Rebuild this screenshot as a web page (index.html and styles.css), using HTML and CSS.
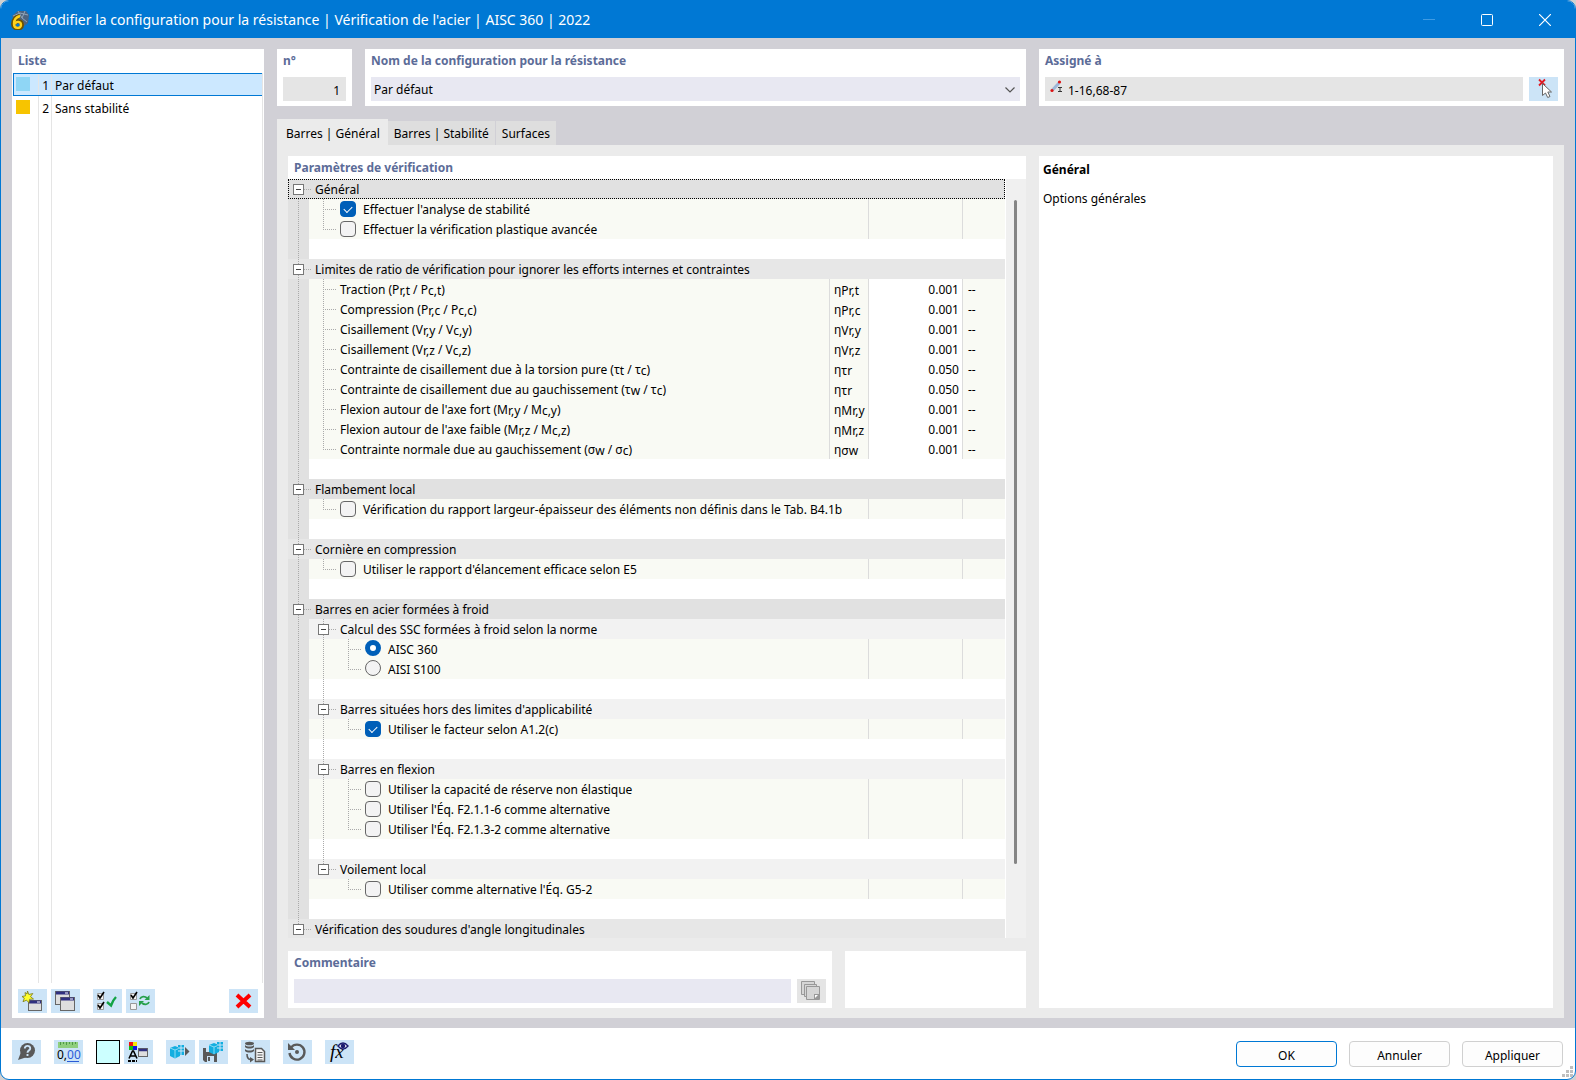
FILE: index.html
```html
<!DOCTYPE html>
<html lang="fr">
<head>
    <meta charset="UTF-8">
    <meta name="viewport" content="width=device-width, initial-scale=1.0">
    <title>Modifier la configuration pour la résistance</title>
    <link rel="stylesheet" href="styles.css">
</head>
<body>
<div class="window">
    <header class="titlebar">
        <svg class="app-icon" width="20" height="20" viewBox="0 0 20 20">
            <path d="M2 6 L8 1 L16 1 L19 5 L18 13 L13 17 L6 12 Z" fill="#4d6480"/>
            <path d="M3 6 L10 3 L18 5 M8 1 L12 8 L17 12 M15 1 L12 8" stroke="#8fa4ba" fill="none"/>
            <path d="M10 6 C5 7 3 10 3 14 C3 20 12 20 12 15 C12 10 6 10 5 14" stroke="#6b5300" stroke-width="4" fill="none"/>
            <path d="M10 6 C6 7 4 10 4 14 C4 19 11 19 11 15 C11 11 6 11 5 14" stroke="#ffd21c" stroke-width="2.4" fill="none"/>
        </svg>
        <h1>Modifier la configuration pour la résistance | Vérification de l'acier | AISC 360 | 2022</h1>
        <button class="win-btn" aria-label="Réduire" disabled><svg width="12" height="12"><path d="M0 5.5H12" stroke="#3f9be3"/></svg></button>
        <button class="win-btn" aria-label="Agrandir"><svg width="12" height="12"><rect x=".5" y=".5" width="11" height="11" rx="1" fill="none" stroke="#fff"/></svg></button>
        <button class="win-btn" aria-label="Fermer"><svg width="12" height="12"><path d="M0 0L12 12M12 0L0 12" stroke="#fff" stroke-width="1.2"/></svg></button>
    </header>

    <main>
        <aside class="list panel">
            <h2>Liste</h2>
            <ul class="configs">
                <li class="selected"><i class="swatch blue"></i><span class="num">1</span><span class="name">Par défaut</span></li>
                <li><i class="swatch yellow"></i><span class="num">2</span><span class="name">Sans stabilité</span></li>
            </ul>
            <div class="list-tools">
                <button class="tool" aria-label="Nouveau">
                    <svg width="29" height="24"><rect x="10.500" y="11.500" width="13" height="10" fill="#dedede" stroke="#666"/><path d="M11 13h12" stroke="#303080" stroke-width="3"/><path d="M19 13h3" stroke="#fff"/><path d="M9.500 2l1.300 3.500 4-1-2.300 3.200 3 2.300-4 .3-.5 3.400-2.500-2.500-3.500 1.500 1.300-3.500L4 7.500l3.500-.7L7 3.500l2 1.500z" fill="#ffff2e" stroke="#777718" stroke-width=".8"/></svg>
                </button>
                <button class="tool" aria-label="Copier">
                    <svg width="29" height="24"><rect x="4.500" y="2.500" width="14" height="13" fill="#dedede" stroke="#666"/><path d="M5 4h13" stroke="#303080" stroke-width="3"/><path d="M14 4h3" stroke="#fff"/><rect x="9.500" y="8.500" width="14" height="13" fill="#dedede" stroke="#666"/><path d="M10 10h13" stroke="#303080" stroke-width="3"/><path d="M19 10h3" stroke="#fff"/></svg>
                </button>
                <button class="tool gap" aria-label="Tout sélectionner">
                    <svg width="29" height="24"><path d="M4.500 4.500h6v6h-6zM4.500 14.500h6v6h-6z" fill="#f4f4f4" stroke="#999"/><path d="M5 6l2 3 4-6M5 16l2 3 4-6" stroke="#000" stroke-width="1.600" fill="none"/><path d="M14 13l4 3.500Q20 11 23 8" stroke="#13a344" stroke-width="2.400" fill="none"/></svg>
                </button>
                <button class="tool" aria-label="Inverser la sélection">
                    <svg width="29" height="24"><path d="M4.500 4.500h6v6h-6zM4.500 14.500h6v6h-6z" fill="#f4f4f4" stroke="#999"/><path d="M5 6l2 3 4-6" stroke="#000" stroke-width="1.600" fill="none"/><path d="M14 10c1-3 5-3 7-1M23 13c-1 3-5 3-7 1" stroke="#27a04b" stroke-width="1.800" fill="none"/><path d="M23.500 6v5h-5zM13 17v-5h5z" fill="#27a04b"/></svg>
                </button>
                <button class="tool delete" aria-label="Supprimer">
                    <svg width="29" height="24"><path d="M8 6L21 18M21 6L8 18" stroke="#f00" stroke-width="4"/></svg>
                </button>
            </div>
        </aside>

        <div class="content">
            <div class="top">
                <div class="panel number">
                    <label for="no">n°</label>
                    <input type="text" id="no" class="field grey" value="1" readonly>
                </div>
                <div class="panel name-panel">
                    <label for="config-name">Nom de la configuration pour la résistance</label>
                    <div class="combo">
                        <select id="config-name" class="field">
                            <option>Par défaut</option>
                            <option>Sans stabilité</option>
                        </select>
                        <svg width="10" height="6"><path d="M.5.500L5 5 9.500.500" fill="none" stroke="#555" stroke-width="1.200"/></svg>
                    </div>
                </div>
                <div class="panel assigned">
                    <label for="assigned">Assigné à</label>
                    <div class="inline">
                        <div class="assigned-box">
                            <svg width="13" height="14"><path d="M2.500 10L9 3" stroke="#9db6d8" stroke-width="3"/><circle cx="2" cy="10.500" r="1.600" fill="#d11"/><circle cx="9.500" cy="2" r="1.600" fill="#d11"/><path d="M8 7.500h4M8 11.500h4M10 7.500v4" stroke="#333"/></svg>
                            <input type="text" id="assigned" value="1-16,68-87" readonly>
                        </div>
                        <button class="tool" aria-label="Sélectionner">
                            <svg width="29" height="24"><path d="M10 2.500l6 6M16 2.500l-6 6" stroke="#e01b24" stroke-width="1.800"/><path d="M13.500 6.500v12l3-2.500 2.200 4.500 2.300-1-2.200-4.500h3.700z" fill="#fff" stroke="#666"/></svg>
                        </button>
                    </div>
                </div>
            </div>

            <div class="tabs" role="tablist">
                <button class="tab active" role="tab">Barres | Général</button>
                <button class="tab" role="tab">Barres | Stabilité</button>
                <button class="tab" role="tab">Surfaces</button>
            </div>

            <div class="tab-body">
                <div class="params">
                    <div class="tree-panel">
                        <h2>Paramètres de vérification</h2>
                        <div class="tree-wrap">
                            <div class="tree">
                                <section>
                                    <div class="head focused"><button class="toggle" aria-label="Réduire"></button><i class="dots"></i>Général</div>
                                    <div class="body">
                                        <div class="row"><div class="cell"><i class="branch"></i><label><input type="checkbox" checked>Effectuer l'analyse de stabilité</label></div><i class="val"></i><i class="unit"></i></div>
                                        <div class="row last"><div class="cell"><i class="branch"></i><label><input type="checkbox">Effectuer la vérification plastique avancée</label></div><i class="val"></i><i class="unit"></i></div>
                                        <div class="blank"></div>
                                    </div>
                                </section>

                                <section>
                                    <div class="head"><button class="toggle" aria-label="Réduire"></button><i class="dots"></i>Limites de ratio de vérification pour ignorer les efforts internes et contraintes</div>
                                    <div class="body">
                                        <div class="row"><div class="cell"><i class="branch"></i><label for="v1">Traction (P<sub>r,t</sub> / P<sub>c,t</sub>)</label></div><span class="sym">η<sub>Pr,t</sub></span><input type="text" class="val" id="v1" value="0.001"><span class="unit">--</span></div>
                                        <div class="row"><div class="cell"><i class="branch"></i><label for="v2">Compression (P<sub>r,c</sub> / P<sub>c,c</sub>)</label></div><span class="sym">η<sub>Pr,c</sub></span><input type="text" class="val" id="v2" value="0.001"><span class="unit">--</span></div>
                                        <div class="row"><div class="cell"><i class="branch"></i><label for="v3">Cisaillement (V<sub>r,y</sub> / V<sub>c,y</sub>)</label></div><span class="sym">η<sub>Vr,y</sub></span><input type="text" class="val" id="v3" value="0.001"><span class="unit">--</span></div>
                                        <div class="row"><div class="cell"><i class="branch"></i><label for="v4">Cisaillement (V<sub>r,z</sub> / V<sub>c,z</sub>)</label></div><span class="sym">η<sub>Vr,z</sub></span><input type="text" class="val" id="v4" value="0.001"><span class="unit">--</span></div>
                                        <div class="row"><div class="cell"><i class="branch"></i><label for="v5">Contrainte de cisaillement due à la torsion pure (τ<sub>t</sub> / τ<sub>c</sub>)</label></div><span class="sym">η<sub>τr</sub></span><input type="text" class="val" id="v5" value="0.050"><span class="unit">--</span></div>
                                        <div class="row"><div class="cell"><i class="branch"></i><label for="v6">Contrainte de cisaillement due au gauchissement (τ<sub>w</sub> / τ<sub>c</sub>)</label></div><span class="sym">η<sub>τr</sub></span><input type="text" class="val" id="v6" value="0.050"><span class="unit">--</span></div>
                                        <div class="row"><div class="cell"><i class="branch"></i><label for="v7">Flexion autour de l'axe fort (M<sub>r,y</sub> / M<sub>c,y</sub>)</label></div><span class="sym">η<sub>Mr,y</sub></span><input type="text" class="val" id="v7" value="0.001"><span class="unit">--</span></div>
                                        <div class="row"><div class="cell"><i class="branch"></i><label for="v8">Flexion autour de l'axe faible (M<sub>r,z</sub> / M<sub>c,z</sub>)</label></div><span class="sym">η<sub>Mr,z</sub></span><input type="text" class="val" id="v8" value="0.001"><span class="unit">--</span></div>
                                        <div class="row last"><div class="cell"><i class="branch"></i><label for="v9">Contrainte normale due au gauchissement (σ<sub>w</sub> / σ<sub>c</sub>)</label></div><span class="sym">η<sub>σw</sub></span><input type="text" class="val" id="v9" value="0.001"><span class="unit">--</span></div>
                                        <div class="blank"></div>
                                    </div>
                                </section>

                                <section>
                                    <div class="head"><button class="toggle" aria-label="Réduire"></button><i class="dots"></i>Flambement local</div>
                                    <div class="body">
                                        <div class="row last"><div class="cell"><i class="branch"></i><label><input type="checkbox">Vérification du rapport largeur-épaisseur des éléments non définis dans le Tab. B4.1b</label></div><i class="val"></i><i class="unit"></i></div>
                                        <div class="blank"></div>
                                    </div>
                                </section>

                                <section>
                                    <div class="head"><button class="toggle" aria-label="Réduire"></button><i class="dots"></i>Cornière en compression</div>
                                    <div class="body">
                                        <div class="row last"><div class="cell"><i class="branch"></i><label><input type="checkbox">Utiliser le rapport d'élancement efficace selon E5</label></div><i class="val"></i><i class="unit"></i></div>
                                        <div class="blank"></div>
                                    </div>
                                </section>

                                <section>
                                    <div class="head"><button class="toggle" aria-label="Réduire"></button><i class="dots"></i>Barres en acier formées à froid</div>
                                    <div class="body">
                                        <div class="subhead"><button class="toggle" aria-label="Réduire"></button><i class="dots"></i>Calcul des SSC formées à froid selon la norme</div>
                                        <div class="row"><div class="cell"><i class="rail"></i><i class="branch"></i><label><input type="radio" name="norme" checked>AISC 360</label></div><i class="val"></i><i class="unit"></i></div>
                                        <div class="row last"><div class="cell"><i class="rail"></i><i class="branch"></i><label><input type="radio" name="norme">AISI S100</label></div><i class="val"></i><i class="unit"></i></div>
                                        <div class="blank"><i class="rail"></i></div>

                                        <div class="subhead"><button class="toggle" aria-label="Réduire"></button><i class="dots"></i>Barres situées hors des limites d'applicabilité</div>
                                        <div class="row last"><div class="cell"><i class="rail"></i><i class="branch"></i><label><input type="checkbox" checked>Utiliser le facteur selon A1.2(c)</label></div><i class="val"></i><i class="unit"></i></div>
                                        <div class="blank"><i class="rail"></i></div>

                                        <div class="subhead"><button class="toggle" aria-label="Réduire"></button><i class="dots"></i>Barres en flexion</div>
                                        <div class="row"><div class="cell"><i class="rail"></i><i class="branch"></i><label><input type="checkbox">Utiliser la capacité de réserve non élastique</label></div><i class="val"></i><i class="unit"></i></div>
                                        <div class="row"><div class="cell"><i class="rail"></i><i class="branch"></i><label><input type="checkbox">Utiliser l'Éq. F2.1.1-6 comme alternative</label></div><i class="val"></i><i class="unit"></i></div>
                                        <div class="row last"><div class="cell"><i class="rail"></i><i class="branch"></i><label><input type="checkbox">Utiliser l'Éq. F2.1.3-2 comme alternative</label></div><i class="val"></i><i class="unit"></i></div>
                                        <div class="blank"><i class="rail"></i></div>

                                        <div class="subhead end"><button class="toggle" aria-label="Réduire"></button><i class="dots"></i>Voilement local</div>
                                        <div class="row last"><div class="cell"><i class="rail none"></i><i class="branch"></i><label><input type="checkbox">Utiliser comme alternative l'Éq. G5-2</label></div><i class="val"></i><i class="unit"></i></div>
                                        <div class="blank"></div>
                                    </div>
                                </section>

                                <section>
                                    <div class="head end"><button class="toggle" aria-label="Réduire"></button><i class="dots"></i>Vérification des soudures d'angle longitudinales</div>
                                </section>
                            </div>
                            <div class="scrollbar"><div class="thumb"></div></div>
                        </div>
                    </div>

                    <div class="bottom">
                        <div class="panel comment">
                            <label for="comment">Commentaire</label>
                            <div class="inline">
                                <input type="text" id="comment" class="field">
                                <button class="tool off" aria-label="Choisir un commentaire">
                                    <svg width="29" height="24"><g fill="#d6d6d6" stroke="#999"><path d="M4.500 2.500h13v13h-13z"/><path d="M7.500 5.500h12v12h-12z"/><path d="M9.500 7.500h13v13h-13z"/></g><path d="M17 15h5v5h-5z" fill="#999"/><path d="M18 16h3l-3 3z" fill="#fff"/></svg>
                                </button>
                            </div>
                        </div>
                        <div class="panel preview"></div>
                    </div>
                </div>

                <div class="help">
                    <h3>Général</h3>
                    <p>Options générales</p>
                </div>
            </div>
        </div>
    </main>

    <footer>
        <button class="tool" aria-label="Aide">
            <svg width="29" height="24"><circle cx="15.500" cy="10.500" r="7.500" fill="#595959"/><path d="M9 12l-3 8 9-3z" fill="#595959"/><path d="M12.800 8.500c0-3.600 5.600-3.400 5.400 0 0 2-2.700 1.800-2.700 4.200M15.500 14v2" stroke="#cce4f7" stroke-width="1.900" fill="none"/></svg>
        </button>
        <button class="tool gap" aria-label="Unités">
            <svg width="29" height="24"><rect x="4" y="2" width="20" height="6" fill="#8fce7e"/><path d="M6.500 2v3M9.500 2v2M12.500 2v3M15.500 2v2M18.500 2v3M21.500 2v2" stroke="#4f9a48"/><text x="3" y="19" class="digits">0,<tspan fill="#2a5bd7">00</tspan></text><path d="M13 21.500h12" stroke="#2a5bd7"/></svg>
        </button>
        <button class="color gap" aria-label="Couleur"></button>
        <button class="tool" aria-label="Affichage">
            <svg width="29" height="24"><path d="M5 2h4v4H5z" fill="#e11"/><path d="M9 2h4v4H9z" fill="#f7e600"/><path d="M5 6h4v4H5z" fill="#1b1"/><path d="M9 6h4v4H9z" fill="#11d"/><path d="M5 18.500L8.500 11h1L13 18.500M6.500 16h5" stroke="#000" stroke-width="1.600" fill="none"/><path d="M4 21h9" stroke="#000" stroke-width="2" stroke-dasharray="3 1"/><rect x="14.500" y="8.500" width="9" height="8" fill="#dedede" stroke="#666"/><path d="M15 10h8" stroke="#303080" stroke-width="2.500"/></svg>
        </button>
        <button class="tool gap" aria-label="Importer">
            <svg width="29" height="24"><path d="M4 8l5-2 5 2v8l-5 2.500L4 16z" fill="#12aee0"/><path d="M4 8l5 2 5-2M9 10v8" stroke="#8adcf5" fill="none"/><path d="M12 5h6v10h-6z" fill="#12aee0"/><path d="M12 8h6M12 11h6M15 5v10" stroke="#cce4f7"/><path d="M19 7l4.500 4.500L19 16z" fill="#595959"/></svg>
        </button>
        <button class="tool" aria-label="Enregistrer">
            <svg width="29" height="24"><path d="M4 8h14v14H6l-2-2z" fill="#595959"/><path d="M7 8h6v4H7z" fill="#cce4f7"/><path d="M8 16h7v6H8z" fill="#cce4f7"/><path d="M9 17h2v4H9z" fill="#595959"/><path d="M10 5l5-2 5 2v7l-5 2.500-5-2.500z" fill="#12aee0"/><path d="M10 5l5 2 5-2M15 7v7" stroke="#8adcf5" fill="none"/><path d="M18 2h6v9h-6z" fill="#12aee0"/><path d="M18 5h6M18 8h6M21 2v9" stroke="#cce4f7"/></svg>
        </button>
        <button class="tool gap" aria-label="Base de données">
            <svg width="29" height="24"><g fill="#595959"><ellipse cx="8.500" cy="3.500" rx="4.500" ry="1.800"/><path d="M4 5c2 2 7 2 9 0v2c-2 2-7 2-9 0zM4 9c2 2 7 2 9 0v2c-2 2-7 2-9 0zM9 17l4 2.500-4 3z"/></g><path d="M6 14c0 4 1 5.500 4 5.500" stroke="#595959" stroke-width="1.600" fill="none"/><path d="M14.500 8.500h6l3 3v10h-9z" fill="#f4f4f4" stroke="#595959" stroke-width="1.500"/><path d="M16.500 12.500h5M16.500 15h5M16.500 17.500h5M16.500 20h5" stroke="#595959"/></svg>
        </button>
        <button class="tool gap" aria-label="Réinitialiser">
            <svg width="29" height="24"><path d="M8 7.500A7.500 7.500 0 1 1 6.500 13" stroke="#595959" stroke-width="2.400" fill="none"/><path d="M5 3v7h7z" fill="#595959"/><circle cx="14" cy="12" r="2" fill="#595959"/></svg>
        </button>
        <button class="tool gap" aria-label="Formules">
            <svg width="29" height="24"><text x="5" y="18" class="fx">fx</text><path d="M13 6q5-6 10 0-5 6-10 0z" fill="#fff" stroke="#1c1c70" stroke-width="1.400"/><circle cx="18" cy="6" r="2.300" fill="#1c1c70"/></svg>
        </button>
        <div class="actions">
            <button class="btn primary">OK</button>
            <button class="btn">Annuler</button>
            <button class="btn">Appliquer</button>
        </div>
        <svg class="grip" width="11" height="11"><path d="M8 0h3v3H8zM4 4h3v3H4zM8 4h3v3H8zM0 8h3v3H0zM4 8h3v3H4zM8 8h3v3H8z" fill="#bfbfbf"/></svg>
    </footer>
</div>
</body>
</html>
```
FILE: styles.css
```css
* {
    box-sizing: border-box;
}

body {
    margin: 0;
    background: #d0d0d0;
    color: #000;
    font-family: "Noto Sans", "Open Sans", sans-serif;
    font-size: 12px;
    line-height: 20px;
}

button, input, select {
    font: inherit;
    color: inherit;
    margin: 0;
    padding: 0;
    border: none;
    border-radius: 0;
    outline: none;
}

h1, h2, h3, p, ul {
    margin: 0;
    padding: 0;
}

svg {
    display: block;
    flex: none;
}

.window {
    display: flex;
    flex-direction: column;
    height: 100vh;
    border: 1px solid #0078d4;
    border-radius: 9px;
    background: #fff;
    overflow: hidden;
}

/* title bar */
.titlebar {
    display: flex;
    align-items: center;
    height: 37px;
    padding: 0 1px 0 9px;
    background: #0078d4;
    color: #fff;
    flex: none;
}

.titlebar h1 {
    flex: 1;
    margin-left: 6px;
    font-size: 14px;
    font-weight: normal;
}

.win-btn {
    display: flex;
    align-items: center;
    justify-content: center;
    width: 58px;
    height: 37px;
    background: none;
}

main {
    display: flex;
    flex: 1;
    gap: 13px;
    min-height: 0;
    padding: 11px 11px 10px;
    background: #d1d0d6;
}

.panel {
    background: #fff;
    padding: 0 6px 5px;
}

h2,
.panel > label {
    display: block;
    font-size: 12px;
    font-weight: bold;
    color: #5c6c98;
    line-height: 24px;
}

/* left list */
.list {
    display: flex;
    flex-direction: column;
    width: 252px;
    flex: none;
}

.configs {
    flex: 1;
    margin: 0 -5px 6px;
    list-style: none;
    border-right: 1px solid #e5e5e5;
    background: linear-gradient(#e5e5e5, #e5e5e5) 25px 0 / 1px 100% no-repeat,
                linear-gradient(#e5e5e5, #e5e5e5) 38px 0 / 1px 100% no-repeat;
}

.configs li {
    display: flex;
    align-items: center;
    height: 23px;
    padding: 2px 0 0 3px;
}

.configs .selected {
    background: linear-gradient(#e5e5e5, #e5e5e5) 24px 0 / 1px 100% no-repeat,
                linear-gradient(#e5e5e5, #e5e5e5) 37px 0 / 1px 100% no-repeat, #cce8ff;
    border: 1px solid #0078d4;
    border-right: none;
    padding-left: 2px;
}

.swatch {
    width: 14px;
    height: 14px;
    margin-bottom: 3px;
}

.swatch.blue {
    background: #8fd6f5;
}

.swatch.yellow {
    background: #f7c400;
}

.num {
    width: 19px;
    text-align: right;
}

.name {
    margin-left: 6px;
}

.list-tools {
    display: flex;
    gap: 4px;
}

.tool {
    width: 29px;
    height: 24px;
    background: #cce4f7;
    flex: none;
}

.tool.off {
    background: #e5e5e5;
}

.tool.gap,
.color.gap {
    margin-left: 9px;
}

.tool.delete {
    margin-left: auto;
}

/* top fields */
.content {
    display: flex;
    flex-direction: column;
    flex: 1;
    min-width: 0;
}

.top {
    display: flex;
    gap: 13px;
    margin-bottom: 13px;
}

.top label,
.comment > label {
    margin-bottom: 4px;
}

.number {
    width: 75px;
}

.name-panel {
    flex: 1;
}

.assigned {
    width: 525px;
}

.inline {
    display: flex;
    gap: 6px;
}

.field {
    display: block;
    width: 100%;
    height: 24px;
    padding: 2px 3px 0;
    background: #e8e8f2;
    appearance: none;
}

.field.grey {
    padding-right: 6px;
    background: #e5e5e5;
    text-align: right;
}

.combo {
    position: relative;
}

.combo svg {
    position: absolute;
    right: 5px;
    top: 10px;
}

.assigned-box {
    display: flex;
    flex: 1;
    gap: 5px;
    padding: 3px 0 0 5px;
    background: #e5e5e5;
}

.assigned-box input {
    flex: 1;
    background: none;
}

/* tabs */
.tabs {
    display: flex;
    align-items: flex-end;
    height: 26px;
}

.tab {
    height: 24px;
    padding: 2px 6px 0;
    background: #dedede;
    border-right: 1px solid #d1d0d6;
}

.tab.active {
    height: 26px;
    padding: 3px 8px 0 9px;
    background: #ebebeb;
    border-right: none;
}

.tab-body {
    display: flex;
    flex: 1;
    gap: 13px;
    min-height: 0;
    padding: 11px 11px 10px;
    background: #ebebeb;
}

.params {
    display: flex;
    flex-direction: column;
    flex: 1;
    gap: 13px;
    min-width: 0;
}

.tree-panel {
    display: flex;
    flex-direction: column;
    flex: 1;
    min-height: 0;
    background: #fff;
}

.tree-panel h2 {
    padding-left: 6px;
    line-height: 23px;
}

.tree-wrap {
    display: flex;
    flex: 1;
    min-height: 0;
}

/* parameter tree */
.tree {
    flex: 1;
    margin-right: 1px;
    overflow: hidden;
}

.head,
.subhead {
    display: flex;
    align-items: center;
    height: 20px;
    padding-top: 2px;
    white-space: nowrap;
}

.head {
    padding-left: 5px;
    background: repeating-linear-gradient(#aaa 0 1px, transparent 1px 2px) 10px 0 / 1px 100% no-repeat, #e1e1e1;
}

section:nth-child(even) .head {
    background-color: #e7e7e7;
}

.head.focused {
    background: #e1e1e1;
    outline: 1px dotted #000;
    outline-offset: -1px;
}

.subhead {
    padding-left: 9px;
    background: repeating-linear-gradient(#aaa 0 1px, transparent 1px 2px) 14px 0 / 1px 100% no-repeat, #f2f2f2;
}

.head.end,
.subhead.end {
    background-size: 1px 50%, auto;
}

.toggle {
    width: 11px;
    height: 11px;
    margin-bottom: 1px;
    border: 1px solid #777;
    background: linear-gradient(#444, #444) 2px 4px / 5px 1px no-repeat, #fff;
}

.dots {
    width: 7px;
    height: 1px;
    margin: 0 4px 1px 0;
    background: repeating-linear-gradient(90deg, #aaa 0 1px, transparent 1px 2px);
}

.body {
    padding-left: 21px;
    background: repeating-linear-gradient(#aaa 0 1px, transparent 1px 2px) 10px 0 / 1px 100% no-repeat, #e1e1e1;
}

.row {
    display: flex;
    height: 20px;
    background: #f9faf4;
}

.blank {
    display: flex;
    height: 20px;
    background: #fff;
}

.cell {
    display: flex;
    flex: 1;
    min-width: 0;
    white-space: nowrap;
}

.cell label {
    display: flex;
    align-items: center;
    padding-top: 2px;
}

.cell label[for] {
    display: block;
}

.cell label[for],
.sym,
.val,
.unit {
    padding-top: 1px;
}

.rail {
    width: 25px;
    background: repeating-linear-gradient(#aaa 0 1px, transparent 1px 2px) 14px 0 / 1px 100% no-repeat;
}

.rail.none {
    background: none;
}

.branch {
    width: 13px;
    margin: 0 4px 0 14px;
    background: repeating-linear-gradient(#aaa 0 1px, transparent 1px 2px) 0 0 / 1px 100% no-repeat,
                repeating-linear-gradient(90deg, #aaa 0 1px, transparent 1px 2px) 0 10px / 100% 1px no-repeat;
}

.last .branch {
    background-size: 1px 11px, 100% 1px;
}

sub {
    font-size: 12px;
    line-height: 0;
    vertical-align: -1px;
}

.sym {
    width: 39px;
    padding-left: 4px;
    border-left: 1px solid #dcdcdc;
}

.val {
    width: 94px;
    border-left: 1px solid #dcdcdc;
}

input.val {
    padding-top: 2px;
    padding-right: 3px;
    background: #fff;
    text-align: right;
}

.unit {
    width: 43px;
    padding-left: 5px;
    border-left: 1px solid #dcdcdc;
}

input[type="checkbox"],
input[type="radio"] {
    appearance: none;
    width: 16px;
    height: 16px;
    margin: 0 7px 2px 0;
    border: 1px solid #666;
    border-radius: 4px;
    background: #f3f3f3;
}

input[type="radio"] {
    margin-bottom: 4px;
    border-radius: 50%;
}

input[type="checkbox"]:checked {
    display: grid;
    place-items: center;
    border-color: #005fb8;
    background: #005fb8;
}

input[type="checkbox"]:checked::after {
    content: "";
    width: 7px;
    height: 4px;
    margin-bottom: 2px;
    border: solid #fff;
    border-width: 0 0 1px 1px;
    transform: rotate(-45deg);
}

input[type="radio"]:checked {
    border: 5px solid #005fb8;
    background: #fff;
}

.scrollbar {
    width: 20px;
    padding: 21px 0 0 8px;
    background: #f0f0f0;
}

.thumb {
    width: 3px;
    height: 90%;
    border-radius: 2px;
    background: #858585;
}

/* comment */
.bottom {
    display: flex;
    gap: 13px;
}

.comment {
    flex: 1;
}

.preview {
    width: 181px;
}

.help {
    width: 514px;
    padding: 4px;
    background: #fff;
}

.help h3 {
    margin-bottom: 9px;
    font-size: 12px;
}

/* footer */
footer {
    position: relative;
    display: flex;
    align-items: center;
    gap: 4px;
    height: 51px;
    padding: 0 12px 3px 11px;
    flex: none;
}

.color {
    width: 24px;
    height: 24px;
    border: 1px solid #000;
    background: #ccffff;
}

.digits {
    font-size: 12px;
}

.fx {
    font-family: "Liberation Serif", serif;
    font-size: 19px;
    font-style: italic;
}

.actions {
    display: flex;
    gap: 12px;
    margin-left: auto;
    padding-top: 4px;
}

.btn {
    width: 101px;
    height: 26px;
    padding-top: 3px;
    border: 1px solid #d0d0d0;
    border-radius: 4px;
    background: #fdfdfd;
}

.btn.primary {
    border-color: #0078d4;
}

.grip {
    position: absolute;
    right: 2px;
    bottom: 2px;
}
```
